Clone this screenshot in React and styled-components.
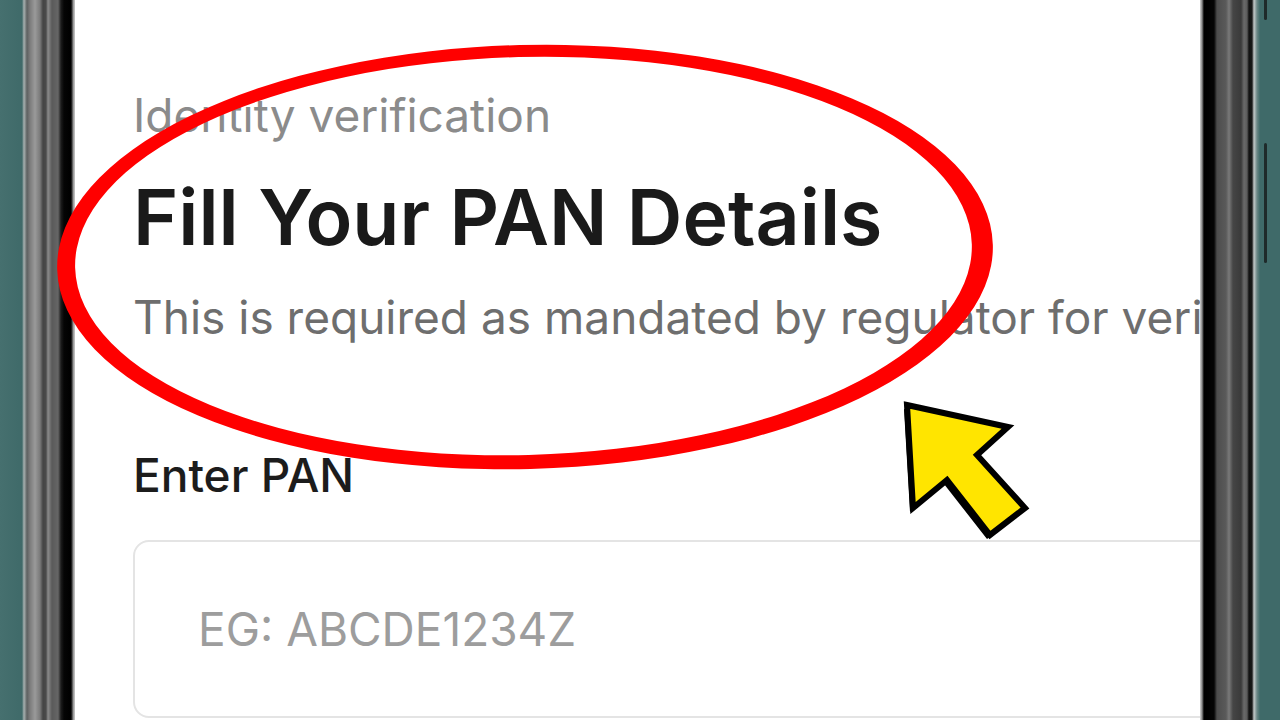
import React from "react";
import styled, { createGlobalStyle } from "styled-components";

const GlobalStyle = createGlobalStyle`
  html, body {
    margin: 0;
    padding: 0;
    background: #3f6a69;
  }
  * {
    box-sizing: border-box;
  }
`;

const Stage = styled.div`
  position: relative;
  width: 1280px;
  height: 720px;
  overflow: hidden;
  display: flex;
  flex-direction: row;
  background: #3f6a69;
  font-family: Inter, "Noto Sans", sans-serif;
`;

const LeftBezel = styled.div`
  width: 75px;
  flex-shrink: 0;
  background: linear-gradient(
    to right,
    #46706f 0px,
    #3f6a69 22px,
    #a7b1b0 24px,
    #5d6161 27px,
    #7c7c7c 30px,
    #9a9a9a 35px,
    #7a7a7a 40px,
    #444 43px,
    #4a4a4a 46px,
    #8a8a8a 48px,
    #5a5a5a 52px,
    #666 58px,
    #1c1c1c 61px,
    #050505 64px,
    #000 71px,
    #bdbdbd 74px
  );
`;

const RightBezel = styled.div`
  position: relative;
  width: 80px;
  flex-shrink: 0;
  background: linear-gradient(
    to right,
    #d4d4d4 0px,
    #8a8a8a 2px,
    #000 4px,
    #050505 14px,
    #4d4d4d 17px,
    #5a5a5a 26px,
    #7a7a7a 29px,
    #454545 33px,
    #3a3a3a 41px,
    #6a6a6a 44px,
    #5c5c5c 47px,
    #111 49px,
    #1a1a1a 52px,
    #c4c9c9 54px,
    #6c8786 57px,
    #3f6a69 60px,
    #3f6a69 80px
  );
`;

/* side key sitting on the frame edge */
const SideKey = styled.span`
  position: absolute;
  left: 64px;
  width: 3px;
  top: ${(p) => p.$top}px;
  height: ${(p) => p.$height}px;
  background: #1e2a2a;
  border-radius: 2px;
`;

const Screen = styled.main`
  flex: 1;
  min-width: 0;
  background: #ffffff;
  overflow: hidden;
  display: flex;
  flex-direction: column;
  padding: 87px 0 0 58px;
`;

const Eyebrow = styled.div`
  font-size: 46px;
  line-height: 56px;
  font-weight: 400;
  color: #8b8b8b;
  white-space: nowrap;
`;

const Title = styled.h1`
  margin: 28px 0 0;
  font-size: 77px;
  line-height: 92px;
  font-weight: 600;
  color: #1a1a1a;
  white-space: nowrap;
`;

const Subtitle = styled.p`
  margin: 26px 0 0;
  font-size: 46px;
  line-height: 56px;
  color: #6e6e6e;
  white-space: nowrap;
`;

const FieldLabel = styled.label`
  display: block;
  margin-top: 102px;
  font-size: 46px;
  line-height: 56px;
  font-weight: 500;
  color: #1c1c1c;
  white-space: nowrap;
`;

const PanInput = styled.input`
  flex-shrink: 0;
  margin-top: 37px;
  width: calc(100% + 40px);
  height: 178px;
  padding: 0 0 0 63px;
  border: 2px solid #e4e4e4;
  border-radius: 16px;
  background: #fff;
  font-family: Inter, "Noto Sans", sans-serif;
  font-size: 46px;
  color: #1c1c1c;
  outline: none;

  &::placeholder {
    color: #9d9d9d;
  }
`;

const Overlay = styled.svg`
  position: absolute;
  inset: 0;
  pointer-events: none;
`;

export default function App() {
  return (
    <>
      <GlobalStyle />
      <Stage>
        <LeftBezel />
        <Screen>
          <Eyebrow>Identity verification</Eyebrow>
          <Title>Fill Your PAN Details</Title>
          <Subtitle>
            This is required as mandated by regulator for verification
          </Subtitle>
          <FieldLabel htmlFor="pan">Enter PAN</FieldLabel>
          <PanInput id="pan" placeholder="EG: ABCDE1234Z" readOnly />
        </Screen>
        <RightBezel>
          <SideKey $top={-10} $height={30} />
          <SideKey $top={143} $height={120} />
        </RightBezel>

        <Overlay width="1280" height="720" viewBox="0 0 1280 720">
          {/* red marker ring, thicker on the right like a brush stroke */}
          <path
            fill="#ff0000"
            fillRule="evenodd"
            d="M57 257 a468 212 0 1 0 936 0 a468 212 0 1 0 -936 0 Z
               M75 256 a448.5 199 0 1 0 897 0 a448.5 199 0 1 0 -897 0 Z"
            transform="rotate(-1.5 525 257)"
          />
          {/* yellow pointer arrow */}
          <polygon
            points="904,409 1005,431 974,459 1022,512 987,539 944,484 910,512"
            fill="#000"
          />
          <polygon
            points="907,405 1008,427 977,455 1025,508 990,535 947,480 913,508"
            fill="#ffe500"
            stroke="#000"
            strokeWidth="6"
            strokeLinejoin="miter"
          />
        </Overlay>
      </Stage>
    </>
  );
}
